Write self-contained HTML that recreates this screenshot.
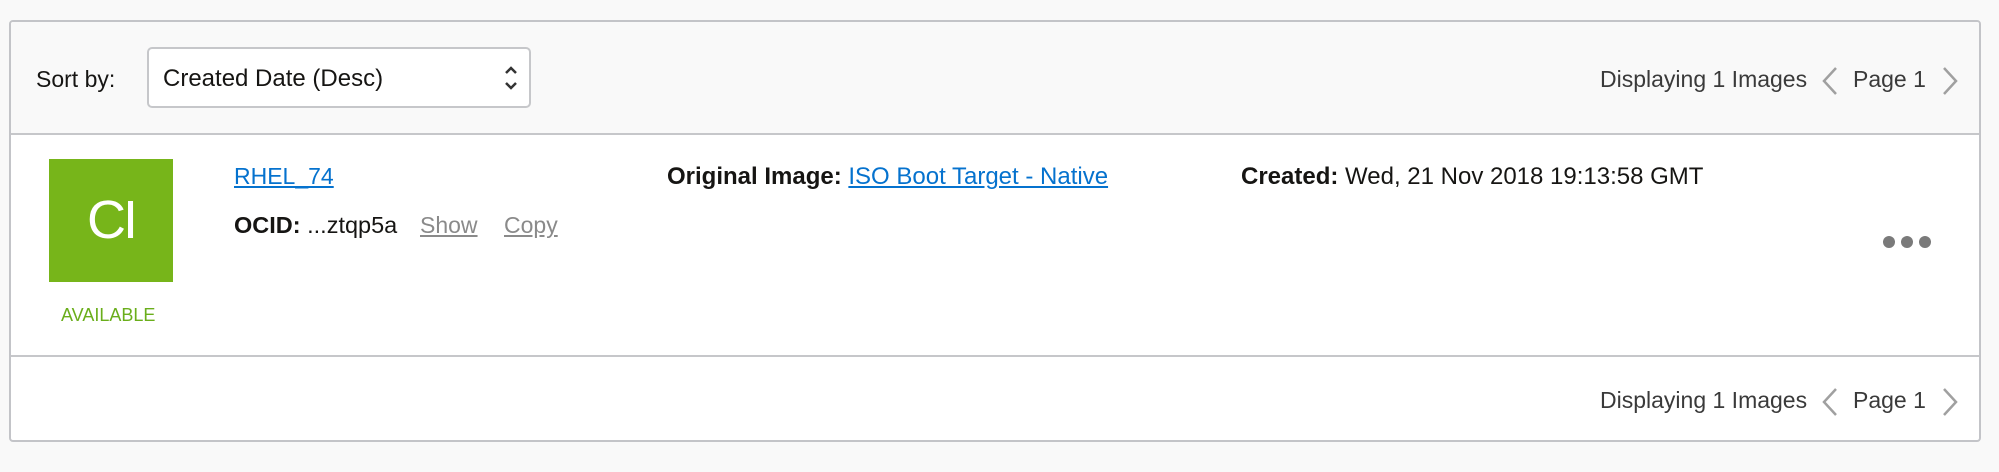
<!DOCTYPE html>
<html><head><meta charset="utf-8"><style>
*{margin:0;padding:0;box-sizing:border-box}
body{width:1999px;height:472px;background:#f9f9f9;font-family:"Liberation Sans",Arial,sans-serif;color:#161513;position:relative;overflow:hidden}
.panel{position:absolute;left:9px;top:20px;width:1972px;height:422px;border:2px solid #c3c4c8;border-radius:4px;background:#fff;overflow:hidden}
.hdr{position:absolute;left:0;top:0;right:0;height:113px;background:#f9f9f9;border-bottom:2px solid #c6c7ca}
.abs{position:absolute;white-space:nowrap}
.sel{position:absolute;left:136px;top:25px;width:384px;height:61px;border:2px solid #c6c7ca;border-radius:5px;background:#fff}
.t23{font-size:23px}
.t24{font-size:24px}
a{color:#0572ce;text-decoration:underline}
.gray{color:#8a8a8a;text-decoration:underline}
.foot{position:absolute;left:0;top:333px;right:0;border-top:2px solid #c6c7ca;height:90px}
.light{color:#3a3a3a}
</style></head><body>
<div class="panel">
 <div class="hdr">
  <div class="abs t23" style="left:25px;top:44px">Sort by:</div>
  <div class="sel">
   <div class="abs t23" style="left:14px;top:16px;font-size:24px">Created Date (Desc)</div>
   <svg class="abs" style="left:353px;top:15px" width="18" height="28" viewBox="0 0 18 28"><path d="M4 9 L9 4 L14 9 M4 19 L9 24 L14 19" fill="none" stroke="#333" stroke-width="2.5"/></svg>
  </div>
  <div class="abs t23 light" style="left:1589px;top:44px">Displaying 1 Images</div>
  <svg class="abs" style="left:1810px;top:45px" width="18" height="28" viewBox="0 0 18 28"><path d="M15 1 L3 14 L15 27" fill="none" stroke="#a0a0a0" stroke-width="2.5"/></svg>
  <div class="abs t23 light" style="left:1842px;top:44px">Page 1</div>
  <svg class="abs" style="left:1930px;top:45px" width="18" height="28" viewBox="0 0 18 28"><path d="M3 1 L15 14 L3 27" fill="none" stroke="#a0a0a0" stroke-width="2.5"/></svg>
 </div>
 <div class="abs" style="left:38px;top:137px;width:124px;height:123px;background:#77b51a;color:#fff;font-size:54px;text-align:center;line-height:123px;letter-spacing:-3px">CI</div>
 <div class="abs" style="left:50px;top:283px;font-size:18px;color:#6aae1b">AVAILABLE</div>
 <div class="abs t23" style="left:223px;top:141px"><a href="#">RHEL_74</a></div>
 <div class="abs" style="left:223px;top:190px;font-size:23.5px"><b>OCID:</b> ...ztqp5a</div>
 <div class="abs t23 gray" style="left:409px;top:190px">Show</div>
 <div class="abs t23 gray" style="left:493px;top:190px">Copy</div>
 <div class="abs t24" style="left:656px;top:141px"><b>Original Image:</b> <a href="#">ISO Boot Target - Native</a></div>
 <div class="abs t24" style="left:1230px;top:141px"><b>Created:</b> Wed, 21 Nov 2018 19:13:58 GMT</div>
 <svg class="abs" style="left:1871px;top:212px" width="50" height="16"><circle cx="7" cy="8" r="6" fill="#7a7a7a"/><circle cx="25" cy="8" r="6" fill="#7a7a7a"/><circle cx="43" cy="8" r="6" fill="#7a7a7a"/></svg>
 <div class="foot">
  <div class="abs t23 light" style="left:1589px;top:30px">Displaying 1 Images</div>
  <svg class="abs" style="left:1810px;top:31px" width="18" height="28" viewBox="0 0 18 28"><path d="M15 1 L3 14 L15 27" fill="none" stroke="#a0a0a0" stroke-width="2.5"/></svg>
  <div class="abs t23 light" style="left:1842px;top:30px">Page 1</div>
  <svg class="abs" style="left:1930px;top:31px" width="18" height="28" viewBox="0 0 18 28"><path d="M3 1 L15 14 L3 27" fill="none" stroke="#a0a0a0" stroke-width="2.5"/></svg>
 </div>
</div>
</body></html>
